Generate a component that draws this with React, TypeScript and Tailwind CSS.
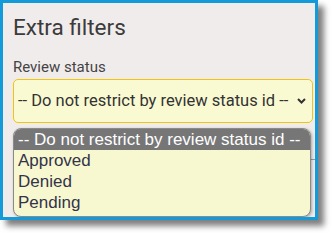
import React from "react";

export default function App() {
  return (
    <div className="w-[332px] h-[233px] bg-white">
      <div className="relative w-[318px] h-[220px] border-[3px] border-[#129ad9] bg-[#f1ecec] shadow-[6px_6px_6px_rgba(0,0,0,0.5)] overflow-hidden">
        <div className="pl-[10px] pt-[11px] flex flex-col">
          <h2 className="font-['Roboto',sans-serif] text-[22.5px] leading-[26px] text-[#3b3b3b]">Extra filters</h2>
          <div className="mt-[17px] font-['Roboto',sans-serif] text-[15px] leading-[20px] text-[#444]">Review status</div>
          <div className="mt-[2px] w-[300px] h-[44px] rounded-[5px] border border-[#f1c40f] bg-[#fafad2] flex items-center justify-between pl-[4px] pr-[6px]">
            <span className="font-['Roboto',sans-serif] text-[16.5px] text-[#333] whitespace-nowrap">-- Do not restrict by review status id --</span>
            <svg width="9" height="6" viewBox="0 0 9 6" className="shrink-0">
              <path d="M1 1 L4.5 4.5 L8 1" fill="none" stroke="#333" strokeWidth="2" />
            </svg>
          </div>
          <div className="mt-[36px] w-[320px] h-[60px] border-t border-[#9a9a9a]"></div>
        </div>
        <div className="absolute left-[10px] top-[125px] w-[298px] h-[89px] rounded-[8px] border border-[#8a8a8a] bg-[#f8f8d0] overflow-hidden shadow-[1px_1px_3px_rgba(0,0,0,0.3)] font-['Liberation_Sans',Arial,sans-serif] text-[17px] leading-[21px] text-[#33334a]">
          <div className="bg-[#767676] text-white pl-[4px] whitespace-nowrap">-- Do not restrict by review status id --</div>
          <div className="pl-[4px]">Approved</div>
          <div className="pl-[4px]">Denied</div>
          <div className="pl-[4px]">Pending</div>
        </div>
      </div>
    </div>
  );
}
